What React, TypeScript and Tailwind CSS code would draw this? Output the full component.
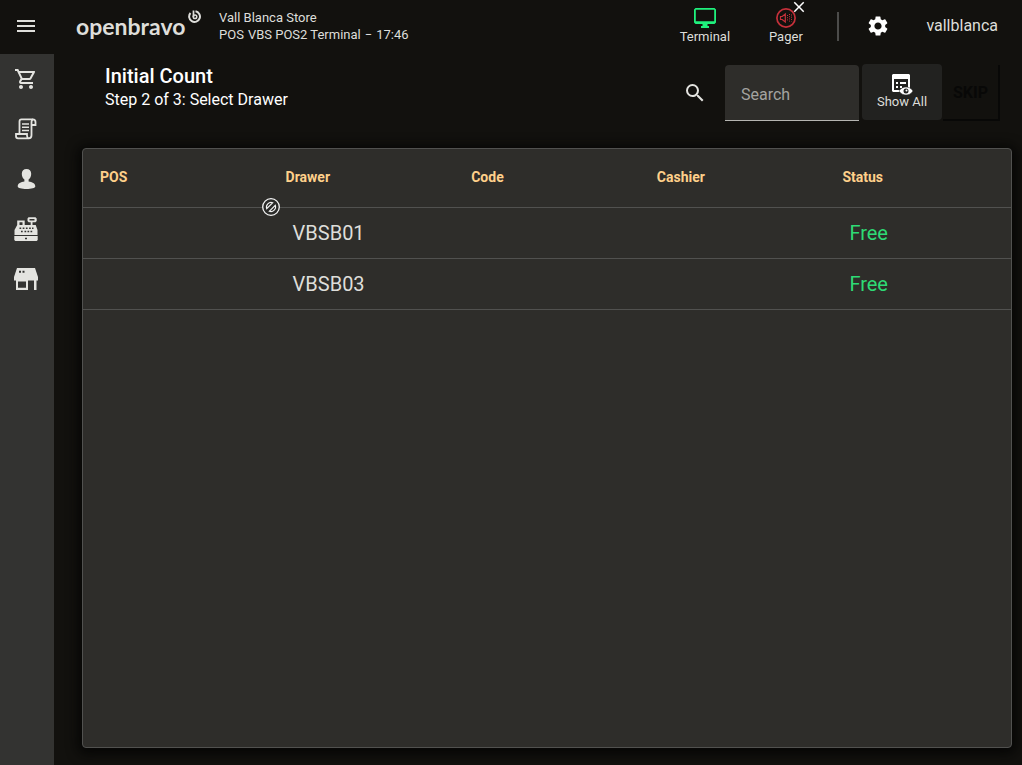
import {
  MdClose,
  MdMenu,
  MdOutlineShoppingCart,
  MdSearch,
  MdSettings,
} from "react-icons/md";

interface Drawer {
  pos: string;
  drawer: string;
  code: string;
  cashier: string;
  status: string;
}

const columns = ["POS", "Drawer", "Code", "Cashier", "Status"];

const drawers: Drawer[] = [
  { pos: "", drawer: "VBSB01", code: "", cashier: "", status: "Free" },
  { pos: "", drawer: "VBSB03", code: "", cashier: "", status: "Free" },
];

function Logo() {
  return (
    <a href="#" aria-label="openbravo" className="relative flex h-full w-[142px] items-center">
      <span className="font-[Lato,sans-serif] text-[23px] font-bold leading-8 text-[#dededa]">
        openbravo
      </span>
      <svg
        viewBox="0 0 26 26"
        className="absolute left-28 top-[10px] h-[13px] w-[13px]"
        fill="none"
        stroke="#dededa"
        strokeWidth="4"
      >
        <path d="M15 2.500A10.800 10.800 0 1 1 5 6" />
        <path d="M11 1v13" strokeWidth="3.500" />
        <circle cx="14" cy="13.500" r="3.600" strokeWidth="3" />
      </svg>
    </a>
  );
}

function ReceiptIcon() {
  return (
    <svg viewBox="0 0 24 24" className="h-6 w-6" fill="none" stroke="currentColor" strokeWidth="1.800">
      <path d="M5.500 17V4.500C5.500 3 6.300 2.300 7.500 2.300h11.300c1.500 0 2.700.8 2.700 2.700v3h-3.500" />
      <path d="M19 2.300c-1.200.3-1.500 1.200-1.500 3v13c0 2-1 3-2.700 3H4c-1.200 0-2-.8-2-2V17h11v1.500c0 1.500.6 2.300 1.500 2.700" />
      <path d="M8 7h7M8 10.200h7M8 13.400h7" strokeWidth="1.500" />
    </svg>
  );
}

function PersonIcon() {
  return (
    <svg viewBox="0 0 24 24" className="h-6 w-6" fill="currentColor">
      <path d="M12.500 2c-2.900 0-4.700 1.900-4.700 4.700 0 2.600 1 4.700 2.600 5.900v1.900c-3.400.7-6.700 1.700-6.700 4.800 0 1.900 3.900 2.700 8.800 2.700s8.800-.8 8.800-2.700c0-3.100-3.300-4.100-6.700-4.800v-1.900c1.600-1.200 2.600-3.300 2.600-5.900 0-2.800-1.800-4.700-4.700-4.700z" />
    </svg>
  );
}

function RegisterIcon() {
  return (
    <svg viewBox="0 0 24 24" className="h-6 w-6" fill="currentColor">
      <path
        fillRule="evenodd"
        d="M3.200 3.500h7.500V8h6V5.200h-2L13.500 4V1.500L14.500.3h7L22.700 1.500V4l-1.200 1.200h-3V8h3.200L23.500 13v5H.5v-5L3.200 8zM5.500 5.300V8h3V5.300zM15.500 2v1.500h5V2z"
      />
      <path d="M.3 19h23.400v4l-1 1H1.300l-1-1z" />
      <g fill="#333331">
        <path d="M5.500 10.500h1.700V12H5.500zM8.700 10.500h1.700V12H8.700zM11.900 10.500h1.700V12h-1.700zM15.100 10.500h1.700V12h-1.700zM18 10.500h1.500V12H18z" />
        <path d="M7 13.800h1.700v1.500H7zM10.500 13.800h1.700v1.500h-1.700zM13.500 13.800h1.700v1.500h-1.700zM16.500 13.800h1.700v1.500h-1.700z" />
        <path d="M11 20.700h2v1.500h-2z" />
      </g>
    </svg>
  );
}

function StoreIcon() {
  return (
    <svg viewBox="0 0 24 24" className="h-6 w-6" fill="currentColor">
      <path
        fillRule="evenodd"
        d="M3 1h18l3 9v3.500h-1.500V23H20v-9.500h-6V23H2v-9.500H0V10zM4 14.500v6.200h8v-6.200z"
      />
      <path d="M5 3.700h2v2H5zM8.500 3.700h2v2h-2z" fill="#333331" />
    </svg>
  );
}

function TerminalIcon() {
  return (
    <svg viewBox="0 0 22 20" className="h-5 w-[22px]" fill="currentColor">
      <path
        fillRule="evenodd"
        d="M1.500 0h19L22 1.500v13L20.500 16H13.500v2h1.500v2H7v-2h1.500v-2h-7L0 14.500v-13zM1.800 1.700v11.500h18.400V1.700z"
      />
    </svg>
  );
}

function PagerIcon() {
  return (
    <svg viewBox="0 0 20 20" className="h-5 w-5" fill="none" stroke="#c4303a">
      <circle cx="10" cy="10" r="9.100" strokeWidth="1.700" />
      <path d="M4.500 8.500h1.700L9.300 6v8l-3.100-2.500H4.500z" strokeWidth="1.200" />
      <path d="M11.500 7v6M13.500 6v8M15.500 6.500v7" strokeWidth="1" strokeDasharray="1 1.200" />
    </svg>
  );
}

function ShowAllIcon() {
  return (
    <svg viewBox="0 0 21 21" className="h-[21px] w-[21px]">
      <path d="M1 0h16l1 1v16l-1 1H1l-1-1V1z" fill="#fff" />
      <path d="M2 5h14v11H2z" fill="#222220" />
      <path d="M4 8h2v2H4zM8 8h6v2H8zM4 12h2v2H4zM8 12h2v2H8z" fill="#fff" />
      <path d="M7 17C9 14 11.500 13 14 13s5 1 7 4c-2 3-4.500 4-7 4s-5-1-7-4z" fill="#fff" stroke="#222220" strokeWidth="0.500" />
      <circle cx="14" cy="17" r="2.500" fill="#222220" />
      <circle cx="14.500" cy="16.500" r="1" fill="#fff" />
    </svg>
  );
}

function ResizeHandle() {
  return (
    <svg
      viewBox="0 0 18 18"
      className="absolute left-[179px] top-[49px] h-[18px] w-[18px]"
      fill="none"
      stroke="#f4f4f4"
    >
      <circle cx="9" cy="9" r="8.300" fill="#2b2b29" strokeWidth="1.300" />
      <path d="M4.700 10.700A4.700 4.700 0 0 1 10.700 4.700z" strokeWidth="1.100" />
      <path d="M13.300 7.300A4.700 4.700 0 0 1 7.300 13.300z" strokeWidth="1.100" />
    </svg>
  );
}

const navItems = [
  { label: "Sales", icon: <MdOutlineShoppingCart className="h-6 w-6" /> },
  { label: "Receipts", icon: <ReceiptIcon /> },
  { label: "Customers", icon: <PersonIcon /> },
  { label: "Cash register", icon: <RegisterIcon /> },
  { label: "Store", icon: <StoreIcon /> },
];

function Header() {
  return (
    <header className="flex h-[54px] shrink-0 items-center pb-[2px] text-[#dededa]">
      <button aria-label="Menu" className="flex h-full w-[52px] items-center justify-center">
        <MdMenu className="h-6 w-6" />
      </button>
      <div className="ml-6 h-full">
        <Logo />
      </div>
      <div className="ml-px text-[13px] leading-[17px]">
        <div>Vall Blanca Store</div>
        <div className="flex gap-1">
          <span>POS</span>
          <span>VBS POS2 Terminal</span>
          <span>−</span>
          <span>17:46</span>
        </div>
      </div>
      <div className="ml-auto flex h-full items-center">
        <button className="flex w-[81px] flex-col items-center gap-px text-[13px] leading-4">
          <span className="text-[#1ff07c]">
            <TerminalIcon />
          </span>
          Terminal
        </button>
        <button className="relative flex w-[81px] flex-col items-center gap-px text-[13px] leading-4">
          <PagerIcon />
          Pager
          <MdClose className="absolute -top-[10px] right-[18px] h-[18px] w-[18px] text-white" />
        </button>
        <div className="ml-[11px] h-[29px] w-[2px] bg-[#4c4c4a]" />
        <button aria-label="Settings" className="flex h-full w-[78px] items-center justify-center text-white">
          <MdSettings className="h-6 w-6" />
        </button>
        <button className="ml-[9px] mr-6 text-base">vallblanca</button>
      </div>
    </header>
  );
}

function Sidebar() {
  return (
    <nav className="flex w-[54px] shrink-0 flex-col bg-[#333331] text-[#e4e4e0]">
      {navItems.map((item) => (
        <a
          key={item.label}
          href="#"
          aria-label={item.label}
          className="flex h-[50px] w-[52px] items-center justify-center"
        >
          {item.icon}
        </a>
      ))}
    </nav>
  );
}

function Toolbar() {
  return (
    <div className="flex h-[94px] items-start pl-[23px] pr-3 pt-[10px]">
      <div className="text-white">
        <h1 className="text-xl font-medium leading-6">Initial Count</h1>
        <p className="text-base leading-6">Step 2 of 3: Select Drawer</p>
      </div>
      <div className="ml-auto flex h-[57px] items-center">
        <label htmlFor="search" aria-label="Search" className="mr-[18px] text-[#e4e4e0]">
          <MdSearch className="h-6 w-6" />
        </label>
        <input
          id="search"
          placeholder="Search"
          className="h-14 w-[134px] self-end rounded-t border-b border-[#b5b5b1] bg-[#2e2d2a] px-4 pt-1 text-base text-white outline-none placeholder:text-[#a3a3a0]"
        />
        <button className="ml-[3px] flex h-14 w-20 flex-col items-center justify-center self-start rounded bg-[#222220] pb-[2px] text-[13px] leading-[14px] text-[#dededa]">
          <ShowAllIcon />
          Show All
        </button>
        <button
          disabled
          className="ml-px h-14 w-[57px] self-end border-b-2 border-r-2 border-[#080807] pt-[2px] text-base font-bold text-[#080807]"
        >
          SKIP
        </button>
      </div>
    </div>
  );
}

function DrawerTable() {
  return (
    <section className="relative flex-1 rounded-sm border border-[#51514f] bg-[#2e2d2a] shadow-[0_2px_12px_4px_#060605]">
      <table className="w-full table-fixed border-separate border-spacing-0 text-left">
        <thead>
          <tr>
            {columns.map((column) => (
              <th
                key={column}
                className="h-[59px] border-b border-[#51514f] pb-[3px] pl-[17px] text-sm font-bold text-[#ffd08a]"
              >
                {column}
              </th>
            ))}
          </tr>
        </thead>
        <tbody className="text-xl text-[#dededa]">
          {drawers.map((d) => (
            <tr key={d.drawer} className="h-[51px]">
              <td className="border-b border-[#51514f] pl-6">{d.pos}</td>
              <td className="border-b border-[#51514f] pl-6">{d.drawer}</td>
              <td className="border-b border-[#51514f] pl-6">{d.code}</td>
              <td className="border-b border-[#51514f] pl-6">{d.cashier}</td>
              <td className="border-b border-[#51514f] pl-6 text-[#2edb75]">{d.status}</td>
            </tr>
          ))}
        </tbody>
      </table>
      <ResizeHandle />
    </section>
  );
}

export default function App() {
  return (
    <div className="flex min-h-screen flex-col bg-[#12110e] font-[Roboto,sans-serif]">
      <Header />
      <div className="flex flex-1">
        <Sidebar />
        <main className="flex flex-1 flex-col pb-[17px] pl-7 pr-[10px]">
          <Toolbar />
          <DrawerTable />
        </main>
      </div>
    </div>
  );
}
